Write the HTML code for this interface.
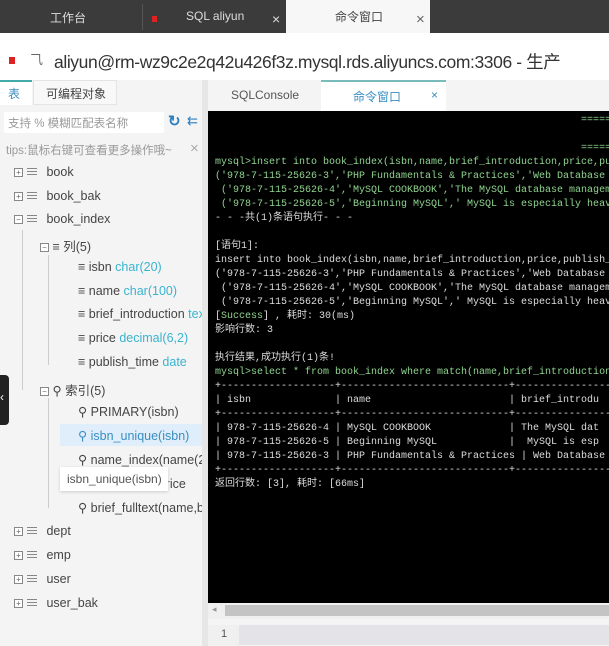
<!DOCTYPE html>
<html><head><meta charset="utf-8"><style>
*{margin:0;padding:0;box-sizing:border-box}
body{width:609px;height:645px;overflow:hidden;background:#f4f4f4;font-family:"Liberation Sans","Noto Sans CJK SC",sans-serif;position:relative;color:#444}
.a{position:absolute;white-space:nowrap}
.con{position:absolute;left:208px;top:111px;width:401px;height:492px;background:#000;overflow:hidden}
.con pre{position:absolute;left:7px;top:3px;font-family:"Liberation Mono","Noto Sans CJK SC",monospace;font-size:10px;line-height:14px;color:#ddd}
.g{color:#8fd48f}
.tr{font-size:12.5px;color:#444}
.ic{display:inline-block;width:9px;height:9px;border:1px solid #888;vertical-align:middle;position:relative;font-size:8px;line-height:7px;text-align:center;color:#666;background:#fff}
.tb{display:inline-block;width:10px;height:9px;vertical-align:middle;margin-left:4px;background:repeating-linear-gradient(#888 0 1px,transparent 1px 3px)}
.cy{color:#3ab3cf}
.line{position:absolute;background:#ccc}
</style></head><body>
<!-- top tabs -->
<div class="a" style="left:0;top:0;width:609px;height:33px;background:#3b3b3b"></div>
<div class="a" style="left:50px;top:9px;color:#ddd;font-size:12px">工作台</div>
<div class="a" style="left:142px;top:4px;width:1px;height:26px;background:#555"></div>
<div class="a" style="left:152px;top:16px;width:5px;height:6px;background:#d22"></div>
<div class="a" style="left:186px;top:9px;color:#ddd;font-size:12px">SQL aliyun</div>
<div class="a" style="left:272px;top:11px;color:#ddd;font-size:14px">×</div>
<div class="a" style="left:286px;top:0;width:144px;height:33px;background:#f7f7f7"></div>
<div class="a" style="left:335px;top:8px;color:#444;font-size:12px">命令窗口</div>
<div class="a" style="left:416px;top:11px;color:#666;font-size:15px">×</div>
<!-- connection bar -->
<div class="a" style="left:0;top:33px;width:609px;height:47px;background:#fff"></div>
<div class="a" style="left:9px;top:57px;width:6px;height:7px;background:#d22"></div>
<div class="a" style="left:30px;top:49px;font-size:13px;color:#666">⺄</div>
<div class="a" style="left:54px;top:49px;font-size:17.5px;color:#333;letter-spacing:-0.4px">aliyun@rm-wz9c2e2q42u426f3z.mysql.rds.aliyuncs.com:3306 - 生产</div>
<!-- left tabs -->
<div class="a" style="left:0;top:80px;width:202px;height:566px;background:#f4f4f4"></div>
<div class="a" style="left:0;top:80px;width:32px;height:25px;background:#fff;border-top:2px solid #4aa"></div>
<div class="a" style="left:8px;top:85px;font-size:12px;color:#3a8ec2">表</div>
<div class="a" style="left:33px;top:80px;width:84px;height:25px;background:#f8f8f8;border:1px solid #e4e4e4"></div>
<div class="a" style="left:46px;top:85px;font-size:12px">可编程对象</div>
<div class="a" style="left:4px;top:112px;width:160px;height:21px;background:#fff"></div>
<div class="a" style="left:8px;top:115px;font-size:11.5px;color:#999">支持 % 模糊匹配表名称</div>
<div class="a" style="left:168px;top:112px;font-size:15px;color:#2b7fc0;font-weight:bold">↻</div>
<div class="a" style="left:187px;top:113px;font-size:13px;color:#2b7fc0">⇇</div>
<div class="a" style="left:6px;top:142px;font-size:11.5px;color:#999">tips:鼠标右键可查看更多操作哦~</div>
<div class="a" style="left:190px;top:140px;font-size:15px;color:#aaa">×</div>
<!-- tree lines -->
<div class="line" style="left:22px;top:230px;width:1px;height:160px"></div>
<div class="line" style="left:48px;top:255px;width:1px;height:110px"></div>
<div class="line" style="left:48px;top:398px;width:1px;height:110px"></div>
<div class="a tr" style="left:14px;top:165px"><span class="ic">+</span><span class="tb"></span> <span style="margin-left:6px">book</span></div>
<div class="a tr" style="left:14px;top:189px"><span class="ic">+</span><span class="tb"></span> <span style="margin-left:6px">book_bak</span></div>
<div class="a tr" style="left:14px;top:212px"><span class="ic">−</span><span class="tb"></span> <span style="margin-left:6px">book_index</span></div>
<div class="a tr" style="left:40px;top:236px"><span class="ic">−</span> ≡ 列(5)</div>
<div class="a tr" style="left:78px;top:260px">≡ isbn <span class="cy">char(20)</span></div>
<div class="a tr" style="left:78px;top:284px">≡ name <span class="cy">char(100)</span></div>
<div class="a tr" style="left:78px;top:307px">≡ brief_introduction <span class="cy">text</span></div>
<div class="a tr" style="left:78px;top:331px">≡ price <span class="cy">decimal(6,2)</span></div>
<div class="a tr" style="left:78px;top:355px">≡ publish_time <span class="cy">date</span></div>
<div class="a tr" style="left:40px;top:380px"><span class="ic">−</span> ⚲ 索引(5)</div>
<div class="a tr" style="left:78px;top:404px">⚲ PRIMARY(isbn)</div>
<div class="a" style="left:60px;top:424px;width:142px;height:22px;background:#dfeefa"></div>
<div class="a tr" style="left:78px;top:428px;color:#3a8ec2">⚲ isbn_unique(isbn)</div>
<div class="a tr" style="left:78px;top:452px">⚲ name_index(name(2</div>
<div class="a tr" style="left:78px;top:476px">⚲ price_index(price</div>
<div class="a" style="left:60px;top:467px;width:108px;height:24px;background:#fff;box-shadow:0 1px 3px #ccc"></div>
<div class="a" style="left:67px;top:472px;font-size:12px;color:#555">isbn_unique(isbn)</div>
<div class="a tr" style="left:78px;top:500px">⚲ brief_fulltext(name,b</div>
<div class="a tr" style="left:14px;top:524px"><span class="ic">+</span><span class="tb"></span> <span style="margin-left:6px">dept</span></div>
<div class="a tr" style="left:14px;top:548px"><span class="ic">+</span><span class="tb"></span> <span style="margin-left:6px">emp</span></div>
<div class="a tr" style="left:14px;top:572px"><span class="ic">+</span><span class="tb"></span> <span style="margin-left:6px">user</span></div>
<div class="a tr" style="left:14px;top:596px"><span class="ic">+</span><span class="tb"></span> <span style="margin-left:6px">user_bak</span></div>
<div class="a" style="left:0;top:375px;width:9px;height:50px;background:#222;border-radius:0 4px 4px 0"></div>
<div class="a" style="left:0;top:390px;color:#fff;font-size:12px">‹</div>
<div class="a" style="left:202px;top:80px;width:6px;height:566px;background:#e6e6e6"></div>
<!-- right tabs -->
<div class="a" style="left:208px;top:80px;width:401px;height:31px;background:#f4f4f4"></div>
<div class="a" style="left:231px;top:88px;font-size:12px;color:#555">SQLConsole</div>
<div class="a" style="left:321px;top:80px;width:125px;height:31px;background:#fff;border-top:2px solid #7bb;"></div>
<div class="a" style="left:353px;top:88px;font-size:12px;color:#3a8ec2">命令窗口</div>
<div class="a" style="left:431px;top:88px;font-size:12px;color:#3a8ec2">×</div>
<div class="con"><pre><span class="g">                                                             =========</span>

<span class="g">                                                             =========</span>
<span class="g">mysql&gt;insert into book_index(isbn,name,brief_introduction,price,publish_time)
('978-7-115-25626-3','PHP Fundamentals &amp; Practices','Web Database
 ('978-7-115-25626-4','MySQL COOKBOOK','The MySQL database managem
 ('978-7-115-25626-5','Beginning MySQL',' MySQL is especially heav</span>
- - -共(1)条语句执行- - -

[语句1]:
insert into book_index(isbn,name,brief_introduction,price,publish_time)
('978-7-115-25626-3','PHP Fundamentals &amp; Practices','Web Database
 ('978-7-115-25626-4','MySQL COOKBOOK','The MySQL database managem
 ('978-7-115-25626-5','Beginning MySQL',' MySQL is especially heav
[<span class="g">Success</span>] , 耗时: 30(ms)
影响行数: 3

执行结果,成功执行(1)条!
<span class="g">mysql&gt;select * from book_index where match(name,brief_introduction)</span>
+-------------------+----------------------------+-----------------
| isbn              | name                       | brief_introdu
+-------------------+----------------------------+-----------------
| 978-7-115-25626-4 | MySQL COOKBOOK             | The MySQL dat
| 978-7-115-25626-5 | Beginning MySQL            |  MySQL is esp
| 978-7-115-25626-3 | PHP Fundamentals &amp; Practices | Web Database
+-------------------+----------------------------+-----------------
返回行数: [3], 耗时: [66ms]</pre></div>
<div class="a" style="left:208px;top:603px;width:401px;height:16px;background:#f0f0f0"></div>
<div class="a" style="left:225px;top:605px;width:384px;height:11px;background:#c4c4c4"></div>
<div class="a" style="left:212px;top:604px;font-size:9px;color:#999">◂</div>
<div class="a" style="left:208px;top:625px;width:401px;height:20px;background:#e4e4e8"></div>
<div class="a" style="left:208px;top:625px;width:31px;height:20px;background:#f0f0f0"></div>
<div class="a" style="left:221px;top:628px;font-size:11px;color:#555">1</div>
</body></html>
